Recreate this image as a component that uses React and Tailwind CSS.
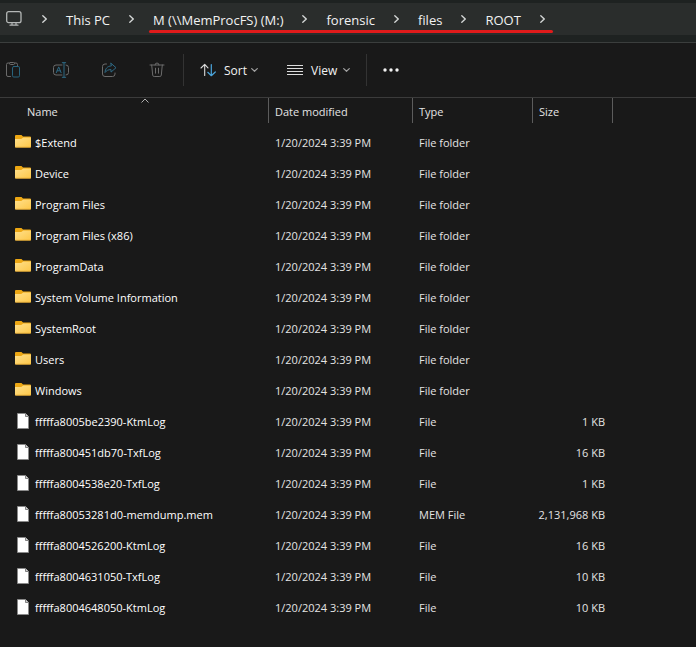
const DATE = "1/20/2024 3:39 PM";

const crumbs = ["M (\\\\MemProcFS) (M:)", "forensic", "files", "ROOT"];

const folders = ["$Extend", "Device", "Program Files", "Program Files (x86)", "ProgramData", "System Volume Information", "SystemRoot", "Users", "Windows"];

const files = [
  { name: "fffffa8005be2390-KtmLog", type: "File", size: "1 KB" },
  { name: "fffffa800451db70-TxfLog", type: "File", size: "16 KB" },
  { name: "fffffa8004538e20-TxfLog", type: "File", size: "1 KB" },
  { name: "fffffa80053281d0-memdump.mem", type: "MEM File", size: "2,131,968 KB" },
  { name: "fffffa8004526200-KtmLog", type: "File", size: "16 KB" },
  { name: "fffffa8004631050-TxfLog", type: "File", size: "10 KB" },
  { name: "fffffa8004648050-KtmLog", type: "File", size: "10 KB" },
];

const rows = [...folders.map((name) => ({ name, type: "File folder", size: "", folder: true })), ...files];

function Icon({ children, className = "" }) {
  return (
    <svg viewBox="0 0 16 16" className={`size-4 shrink-0 ${className}`} fill="none" stroke="currentColor" strokeLinecap="round" strokeLinejoin="round" aria-hidden="true">
      {children}
    </svg>
  );
}

function PcIcon() {
  return (
    <Icon className="text-[#b4b7b6]">
      <rect x=".7" y=".7" width="14.300" height="11" rx="2" strokeWidth="1.300" />
      <path d="M6 12v2M10 12v2M4 14.200h8" strokeWidth="1.200" />
    </Icon>
  );
}

function CrumbChevron() {
  return (
    <svg viewBox="0 0 5 8" className="h-2 w-[5px] shrink-0 text-[#d5d8d7]" fill="none" stroke="currentColor" strokeWidth="1.3" strokeLinecap="round" aria-hidden="true">
      <path d="M.8.8 4.200 4 .8 7.200" />
    </svg>
  );
}

function DownChevron() {
  return (
    <svg viewBox="0 0 7 4" className="h-1 w-[7px] shrink-0 text-[#a0a0a0]" fill="none" stroke="currentColor" strokeWidth="1.2" strokeLinecap="round" aria-hidden="true">
      <path d="M.7.6 3.500 3.300 6.300.6" />
    </svg>
  );
}

function PasteIcon() {
  return (
    <Icon className="text-[#6b6b6b]">
      <path d="M5.500 14.500H3A1.500 1.500 0 0 1 1.500 13V2.500A1.500 1.500 0 0 1 3 1h1.500M9.500 1H11A1.500 1.500 0 0 1 12.500 2.500v1" />
      <path d="M5.500.5h3a1 1 0 0 1 0 2h-3a1 1 0 0 1 0-2z" />
      <rect x="7.500" y="4.500" width="7" height="10.500" rx="1.300" stroke="#28647d" />
    </Icon>
  );
}

function RenameIcon() {
  return (
    <Icon className="text-[#6b6b6b]">
      <path d="M9 13H3A2.500 2.500 0 0 1 .5 10.500v-5A2.500 2.500 0 0 1 3 3h6M13 3a2.500 2.500 0 0 1 2.500 2.500v5A2.500 2.500 0 0 1 13 13" />
      <path d="M3.300 10.700 5.700 4.900l2.400 5.800M4.200 8.800h3M9.300.7h3.400M11 .7v14.600M9.300 15.300h3.400" stroke="#2e6a85" />
    </Icon>
  );
}

function ShareIcon() {
  return (
    <Icon className="text-[#6b6b6b]">
      <path d="M5.500 2H4A2.500 2.500 0 0 0 1.500 4.500V12A2.500 2.500 0 0 0 4 14.500h7.500A2.500 2.500 0 0 0 14 12v-1" />
      <path d="M10 1.300 15 5.700l-5 4.400V7.600C7.200 7.600 5.500 8.500 4 10.500 4.200 6.800 6.200 4.200 10 3.900z" stroke="#2e6a85" />
    </Icon>
  );
}

function TrashIcon() {
  return (
    <Icon className="text-[#6b6b6b]">
      <path d="M1 3h14M6 3a2 2 0 0 1 4 0M2.700 3l1 10.200A1.500 1.500 0 0 0 5.200 14.500h5.600a1.500 1.500 0 0 0 1.500-1.300L13.300 3M6.500 6.200v5M9.500 6.200v5" />
    </Icon>
  );
}

function SortIcon() {
  return (
    <Icon className="text-[#dcdcdc]">
      <path d="M4.700 13.500V2.500M1 6l3.700-3.700L8 5.800" strokeWidth="1.100" />
      <path d="M11.300 2.500v11M7.800 10.300l3.500 3.400L15.300 10" stroke="#4ba6dd" strokeWidth="1.200" />
    </Icon>
  );
}

function ViewIcon() {
  return (
    <Icon className="text-[#dcdcdc]">
      <path d="M0 3.500h16M0 6.500h16M0 9.500h16M0 12.500h16" strokeLinecap="butt" />
    </Icon>
  );
}

function FolderIcon() {
  return (
    <svg viewBox="0 0 16 16" className="size-4 shrink-0" aria-hidden="true">
      <defs>
        <linearGradient id="folder" x1="0" y1="0" x2="1" y2="1">
          <stop offset="0" stopColor="#ffe08c" />
          <stop offset="1" stopColor="#fdc748" />
        </linearGradient>
      </defs>
      <path d="M0 2A1 1 0 0 1 1 1h5.500L8 2.500h7a1 1 0 0 1 1 1V12H0z" fill="#eda713" />
      <path d="M0 5h6.200L8.300 3.500H16v9.200a.8.8 0 0 1-.8.8H.8a.8.8 0 0 1-.8-.8z" fill="url(#folder)" />
      <path d="M.3 13.200h15.400" stroke="#e8a92c" strokeWidth=".7" />
    </svg>
  );
}

function FileIcon() {
  return (
    <svg viewBox="0 0 16 16" className="size-4 shrink-0" aria-hidden="true">
      <path d="M2.500.5h8l3 3v12h-11z" fill="#fff" stroke="#8a8a8a" strokeWidth=".9" />
      <path d="M10.500.5v3h3" fill="#d0d0d0" stroke="#777" strokeWidth=".9" />
    </svg>
  );
}

function Crumb({ children }) {
  return (
    <>
      <button className="pt-0.5 whitespace-nowrap">{children}</button>
      <CrumbChevron />
    </>
  );
}

function AddressBar() {
  return (
    <div className="border-b border-[#3b3e3d] bg-[#1e2221] pt-[3px] pb-[7px]">
      <nav aria-label="Address" className="flex h-8 items-center gap-[19px] bg-[#2a2d2c] pl-1.5 text-[13px] leading-5 text-[#f2f2f2]">
        <div className="flex items-center gap-5"><PcIcon /><CrumbChevron /></div>
        <Crumb>This PC</Crumb>
        <div className="relative flex h-full items-center gap-[19px]">
          {crumbs.map((c) => <Crumb key={c}>{c}</Crumb>)}
          <span className="absolute -right-2 bottom-0.5 -left-1 h-[3px] rounded-full bg-[#e01b1b]" />
        </div>
      </nav>
    </div>
  );
}

function Toolbar() {
  return (
    <div className="flex h-[55px] items-center border-b border-[#3b3b3b] text-xs text-[#f2f2f2]">
      <div className="flex gap-8 pr-[18px] pl-[5px]">
        <button aria-label="Paste" disabled><PasteIcon /></button>
        <button aria-label="Rename" disabled><RenameIcon /></button>
        <button aria-label="Share" disabled><ShareIcon /></button>
        <button aria-label="Delete" disabled><TrashIcon /></button>
      </div>
      <div className="flex h-8 items-center gap-[29px] border-x border-[#333] px-4">
        <button className="flex items-center"><SortIcon /><span className="mr-1 ml-2 pt-0.5">Sort</span><DownChevron /></button>
        <button className="flex items-center"><ViewIcon /><span className="mr-1.5 ml-2 pt-0.5">View</span><DownChevron /></button>
      </div>
      <button aria-label="See more" className="ml-4">
        <svg viewBox="0 0 16 4" className="h-1 w-4" fill="#f2f2f2"><circle cx="2" cy="2" r="1.700" /><circle cx="8" cy="2" r="1.700" /><circle cx="14" cy="2" r="1.700" /></svg>
      </button>
    </div>
  );
}

function HeaderCell({ children, sorted }) {
  return (
    <th scope="col" aria-sort={sorted ? "ascending" : undefined} className="p-0 pb-1 font-normal">
      <button className={`relative flex h-[25px] w-full items-center border-r border-[#5c5c5c] pt-0.5 ${sorted ? "pl-[27px]" : "pl-1.5"}`}>
        {children}
        {sorted && (
          <svg viewBox="0 0 8 5" className="absolute top-0 left-[141px] h-[5px] w-2" fill="none" stroke="#b0b0b0" aria-hidden="true"><path d="M.5 4.500 4 1l3.500 3.500" /></svg>
        )}
      </button>
    </th>
  );
}

function FileTable() {
  return (
    <table className="w-full table-fixed text-left text-[11px] leading-[17px] text-[#e4e4e4]">
      <colgroup>
        <col className="w-[269px]" /><col className="w-36" /><col className="w-[120px]" /><col className="w-20" /><col />
      </colgroup>
      <thead>
        <tr>
          <HeaderCell sorted>Name</HeaderCell>
          <HeaderCell>Date modified</HeaderCell>
          <HeaderCell>Type</HeaderCell>
          <HeaderCell>Size</HeaderCell>
          <td />
        </tr>
      </thead>
      <tbody>
        {rows.map((r) => (
          <tr key={r.name} className="h-[31px] whitespace-nowrap">
            <td className="p-0 pl-[15px] text-white">
              <div className="flex items-start gap-1">{r.folder ? <FolderIcon /> : <FileIcon />}{r.name}</div>
            </td>
            <td className="p-0 pl-1.5">{DATE}</td>
            <td className="p-0 pl-1.5">{r.type}</td>
            <td className="p-0 pr-2 text-right">{r.size}</td>
            <td />
          </tr>
        ))}
      </tbody>
    </table>
  );
}

export default function App() {
  return (
    <main className="min-h-screen bg-[#191919] font-['Open_Sans','Noto_Sans',sans-serif]">
      <AddressBar />
      <Toolbar />
      <FileTable />
    </main>
  );
}
